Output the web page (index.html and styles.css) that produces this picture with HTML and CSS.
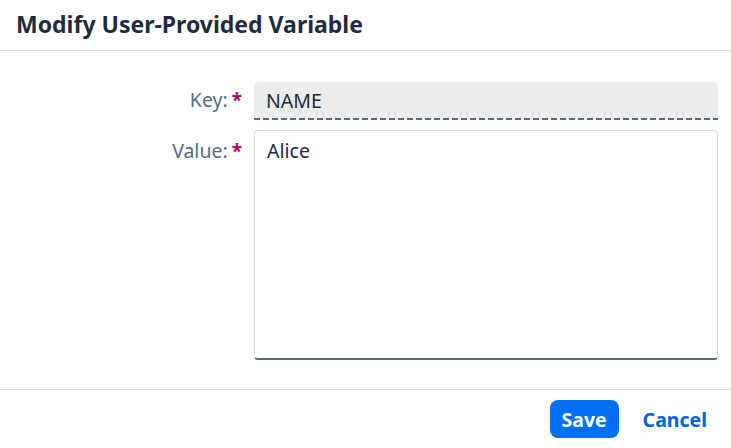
FILE: index.html
```html
<!DOCTYPE html>
<html lang="en">
<head>
<meta charset="utf-8">
<title>Modify User-Provided Variable</title>
<link rel="stylesheet" href="styles.css">
</head>
<body>
<div class="dialog">
  <header class="dlg-header">
    <h1 class="dlg-title">Modify User-Provided Variable</h1>
  </header>
  <main class="dlg-content">
    <div class="form">
      <label class="lbl lbl-key">Key:<span class="req">*</span></label>
      <div class="input readonly">NAME</div>
      <label class="lbl lbl-value">Value:<span class="req">*</span></label>
      <div class="textarea">Alice</div>
    </div>
  </main>
  <footer class="dlg-footer">
    <button class="btn btn-primary">Save</button>
    <button class="btn btn-link">Cancel</button>
  </footer>
</div>
</body>
</html>
```
FILE: styles.css
```css
html, body {
  margin: 0;
  padding: 0;
  background: #ffffff;
}
body {
  font-family: "Noto Sans", "Open Sans", sans-serif;
  color: #1d2d3e;
}
.dialog {
  width: 731px;
  height: 448px;
  display: flex;
  flex-direction: column;
}
.dlg-header {
  height: 51px;
  box-sizing: border-box;
  border-bottom: 1px solid #d9d9d9;
  display: flex;
  align-items: center;
  padding: 0 16px 3px;
}
.dlg-title {
  margin: 0;
  font-size: 23px;
  font-weight: 700;
  color: #1d2d3e;
}
.dlg-content {
  flex: 1;
  padding: 31px 13px 0 0;
}
.form {
  display: grid;
  grid-template-columns: 242px 464px;
  column-gap: 12px;
  row-gap: 10px;
}
.lbl {
  font-size: 19.5px;
  color: #556b82;
  text-align: right;
  white-space: nowrap;
  line-height: 24px;
}
.lbl-key { padding-top: 6px; }
.lbl-value { padding-top: 9px; }
.req {
  color: #aa0a6e;
  font-weight: 700;
  margin-left: 4px;
  font-size: 19px;
}
.input {
  position: relative;
  height: 38px;
  box-sizing: border-box;
  padding: 0 12px;
  font-size: 19.5px;
  line-height: 37px;
  color: #1d2d3e;
}
.readonly {
  background: #eaecee;
  border-radius: 5px 5px 0 0;
}
.readonly::after {
  content: "";
  position: absolute;
  left: 0;
  right: 0;
  bottom: 0;
  height: 2px;
  background: repeating-linear-gradient(to right, #556b82 0 6px, transparent 6px 9px);
}
.textarea {
  height: 230px;
  box-sizing: border-box;
  border: 1px solid #d5dadd;
  border-bottom: 2px solid #556b82;
  border-radius: 4px;
  padding: 8px 12px;
  font-size: 19.5px;
  line-height: 24px;
  color: #1d2d3e;
}
.dlg-footer {
  height: 59px;
  box-sizing: border-box;
  border-top: 1px solid #d9d9d9;
  display: flex;
  align-items: center;
  justify-content: flex-end;
  gap: 14px;
  padding: 0 14px 0 0;
}
.btn {
  height: 38px;
  border: none;
  border-radius: 8px;
  font-family: "Noto Sans", "Open Sans", sans-serif;
  font-size: 19.5px;
  font-weight: 700;
  padding: 0 10px;
  cursor: pointer;
}
.btn-primary {
  background: #0070f2;
  color: #ffffff;
  width: 69px;
  padding: 0;
}
.btn-link {
  background: transparent;
  color: #0064d9;
}
```
